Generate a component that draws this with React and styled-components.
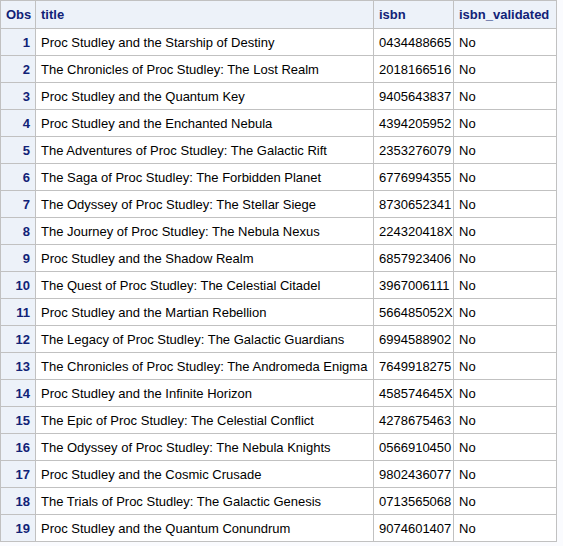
import React from 'react';
import styled, { createGlobalStyle } from 'styled-components';

const rows = [
    ['Proc Studley and the Starship of Destiny', '0434488665'],
    ['The Chronicles of Proc Studley: The Lost Realm', '2018166516'],
    ['Proc Studley and the Quantum Key', '9405643837'],
    ['Proc Studley and the Enchanted Nebula', '4394205952'],
    ['The Adventures of Proc Studley: The Galactic Rift', '2353276079'],
    ['The Saga of Proc Studley: The Forbidden Planet', '6776994355'],
    ['The Odyssey of Proc Studley: The Stellar Siege', '8730652341'],
    ['The Journey of Proc Studley: The Nebula Nexus', '224320418X'],
    ['Proc Studley and the Shadow Realm', '6857923406'],
    ['The Quest of Proc Studley: The Celestial Citadel', '3967006111'],
    ['Proc Studley and the Martian Rebellion', '566485052X'],
    ['The Legacy of Proc Studley: The Galactic Guardians', '6994588902'],
    ['The Chronicles of Proc Studley: The Andromeda Enigma', '7649918275'],
    ['Proc Studley and the Infinite Horizon', '458574645X'],
    ['The Epic of Proc Studley: The Celestial Conflict', '4278675463'],
    ['The Odyssey of Proc Studley: The Nebula Knights', '0566910450'],
    ['Proc Studley and the Cosmic Crusade', '9802436077'],
    ['The Trials of Proc Studley: The Galactic Genesis', '0713565068'],
    ['Proc Studley and the Quantum Conundrum', '9074601407'],
];

const GlobalStyle = createGlobalStyle`
    body {
        margin: 0;
        background: #fafbfe;
        font-family: "Liberation Sans", Arial, sans-serif;
    }
`;

const Table = styled.table`
    border-collapse: collapse;
    table-layout: fixed;
    width: 557px;
    border: 1px solid #c1c1c1;
    font-size: 13px;
`;

const HeadCell = styled.th`
    background: #edf2f9;
    color: #112277;
    font-weight: bold;
    text-align: ${p => (p.$right ? 'right' : 'left')};
    border: 1px solid #c1c1c1;
    padding: 0 5px;
    height: ${p => (p.$top ? '27px' : '26px')};
    white-space: nowrap;
    overflow: hidden;
`;

const Cell = styled.td`
    color: #000;
    background: #fff;
    border: 1px solid #c1c1c1;
    padding: 0 5px;
    height: 26px;
    white-space: nowrap;
    overflow: hidden;
`;

export default function App() {
    return (
        <>
            <GlobalStyle />
            <Table>
                <colgroup>
                    <col style={{ width: 35 }} />
                    <col style={{ width: 338 }} />
                    <col style={{ width: 80 }} />
                    <col style={{ width: 103 }} />
                </colgroup>
                <thead>
                    <tr>
                        <HeadCell $top $right>Obs</HeadCell>
                        <HeadCell $top>title</HeadCell>
                        <HeadCell $top>isbn</HeadCell>
                        <HeadCell $top>isbn_validated</HeadCell>
                    </tr>
                </thead>
                <tbody>
                    {rows.map(([title, isbn], i) => (
                        <tr key={isbn}>
                            <HeadCell $right>{i + 1}</HeadCell>
                            <Cell>{title}</Cell>
                            <Cell>{isbn}</Cell>
                            <Cell>No</Cell>
                        </tr>
                    ))}
                </tbody>
            </Table>
        </>
    );
}
